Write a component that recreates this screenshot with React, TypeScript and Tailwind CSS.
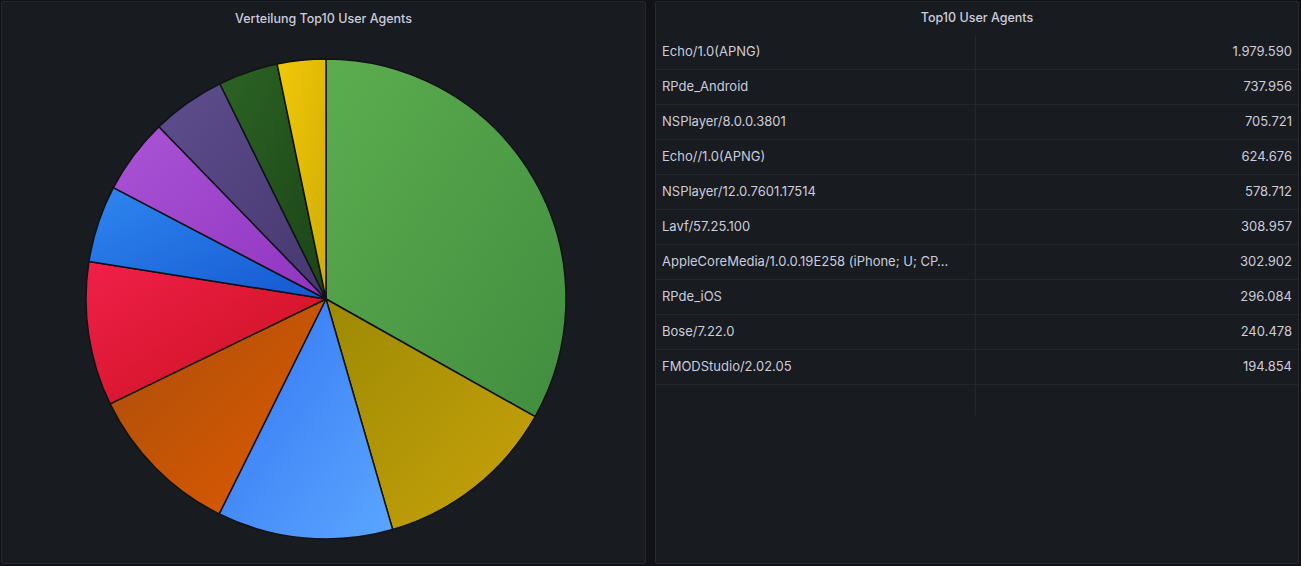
const rows: [string, number, string, string][] = [
  ['Echo/1.0(APNG)', 1979590, '#5cad4f', '#418d3f'],
  ['RPde_Android', 737956, '#9c8a04', '#c9a20a'],
  ['NSPlayer/8.0.0.3801', 705721, '#3274f2', '#5ba6ff'],
  ['Echo//1.0(APNG)', 624676, '#a84e0c', '#e05a00'],
  ['NSPlayer/12.0.7601.17514', 578712, '#f0204a', '#c9101c'],
  ['Lavf/57.25.100', 308957, '#2f86f0', '#1458d0'],
  ['AppleCoreMedia/1.0.0.19E258 (iPhone; U; CP…', 302902, '#ab54d6', '#8f34c0'],
  ['RPde_iOS', 296084, '#5e4e8e', '#45376e'],
  ['Bose/7.22.0', 240478, '#2c6424', '#1b4317'],
  ['FMODStudio/2.02.05', 194854, '#f2c808', '#d0ac06'],
]

const fmt = (n: number) => n.toLocaleString('de-DE')

function Pie() {
  const total = rows.reduce((s, r) => s + r[1], 0)
  const cx = 324, cy = 297, r = 240
  let a = -Math.PI / 2
  return (
    <svg width="646" height="563" className="absolute left-0 top-0">
      <defs>
        {rows.map((row, i) => (
          <linearGradient key={i} id={`g${i}`} x1="0" y1="0" x2="1" y2="1">
            <stop offset="0" stopColor={row[2]} />
            <stop offset="1" stopColor={row[3]} />
          </linearGradient>
        ))}
      </defs>
      {rows.map((row, i) => {
        const a0 = a
        const a1 = a + (row[1] / total) * Math.PI * 2
        a = a1
        const x0 = cx + r * Math.cos(a0), y0 = cy + r * Math.sin(a0)
        const x1 = cx + r * Math.cos(a1), y1 = cy + r * Math.sin(a1)
        const large = a1 - a0 > Math.PI ? 1 : 0
        return (
          <path
            key={i}
            d={`M${cx},${cy} L${x0},${y0} A${r},${r} 0 ${large} 1 ${x1},${y1} Z`}
            fill={`url(#g${i})`}
            stroke="#111217"
            strokeWidth="1.5"
            strokeLinejoin="round"
          />
        )
      })}
    </svg>
  )
}

export default function App() {
  return (
    <div
      className="w-[1301px] h-[566px] bg-[#111217] flex gap-[8px] p-[1px] text-[#ccccdc]"
      style={{ fontFamily: 'Inter, "Noto Sans", sans-serif' }}
    >
      <div className="relative w-[645px] h-[563px] bg-[#181b1f] border border-[#25282e] rounded-[2px]">
        <Pie />
        <div className="relative h-[34px] flex items-center justify-center text-[12.5px] font-medium">
          Verteilung Top10 User Agents
        </div>
      </div>
      <div className="w-[644px] h-[563px] bg-[#181b1f] border border-[#25282e] rounded-[2px] ml-[1px]">
        <div className="h-[33px] flex items-center justify-center text-[12.5px] font-medium">
          Top10 User Agents
        </div>
        <div className="text-[13px]">
          {rows.map((row) => (
            <div key={row[0]} className="h-[35px] flex border-b border-[#23262b]">
              <div className="w-[320px] px-[6px] flex items-center border-r border-[#23262b]">{row[0]}</div>
              <div className="flex-1 px-[6px] flex items-center justify-end">{fmt(row[1])}</div>
            </div>
          ))}
          <div className="h-[30px] w-[320px] border-r border-[#23262b]" />
        </div>
      </div>
    </div>
  )
}
